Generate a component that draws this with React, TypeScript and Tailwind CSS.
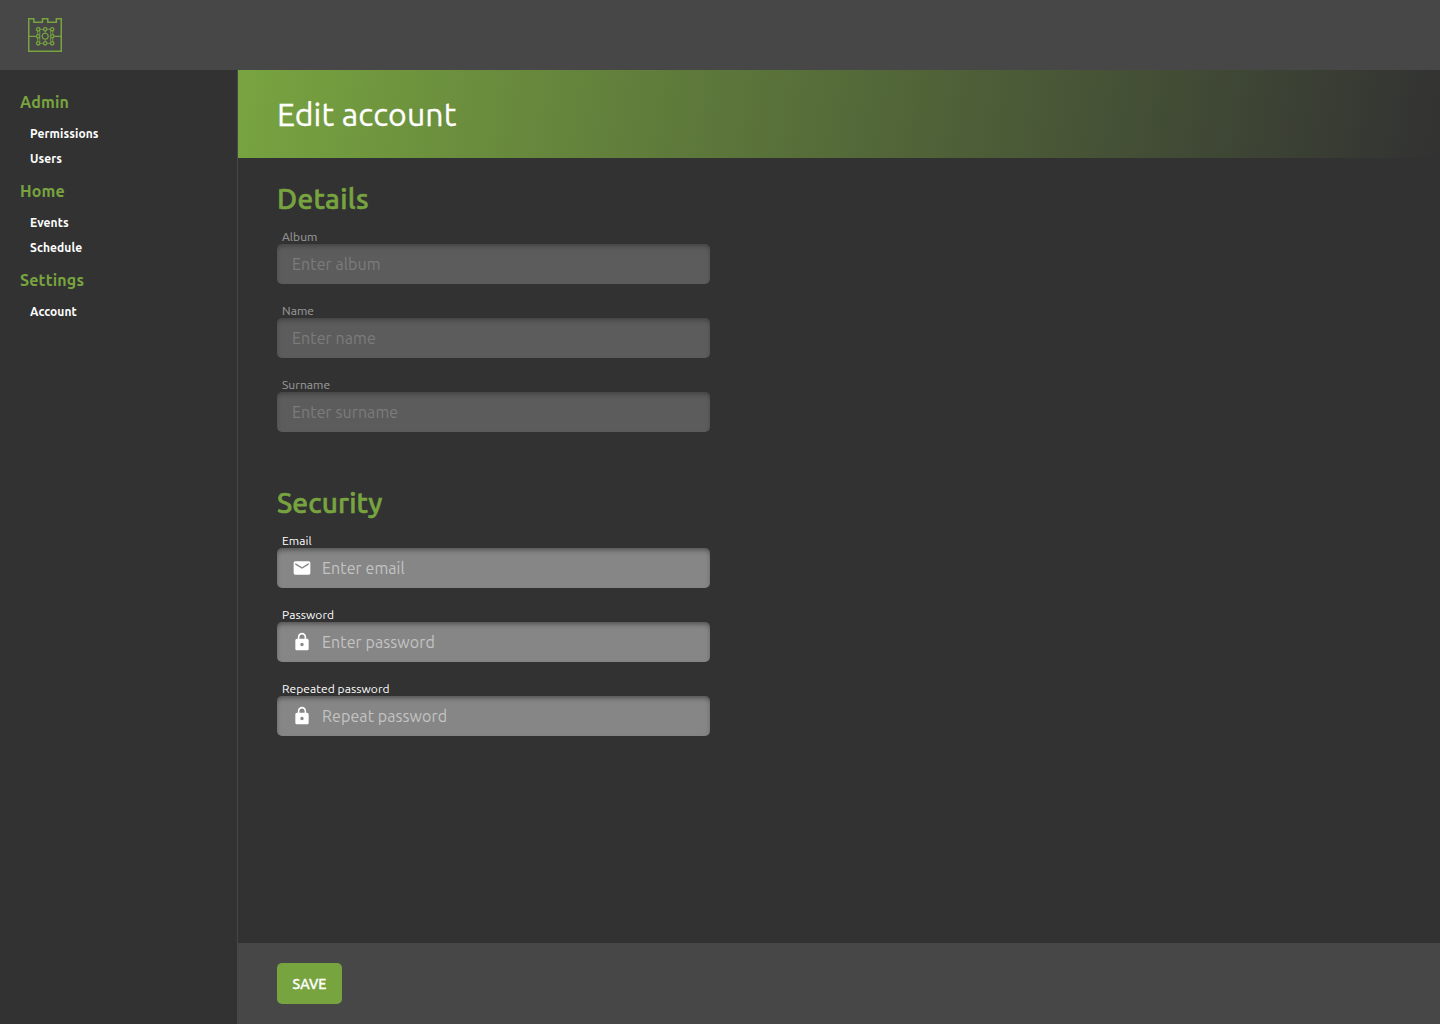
import { MdEmail, MdLock } from "react-icons/md";
import type { IconType } from "react-icons";

const menu = [
  { title: "Admin", items: ["Permissions", "Users"] },
  { title: "Home", items: ["Events", "Schedule"] },
  { title: "Settings", items: ["Account"] },
];

function Logo() {
  const nodes = [
    [10.2, 11.3], [17.2, 11.3], [24.2, 11.3],
    [10.2, 18.3], [24.2, 18.3],
    [10.2, 25.3], [17.2, 25.3], [24.2, 25.3],
  ];
  return (
    <svg className="ml-7 size-[34px]" viewBox="0 0 34 34" fill="none" stroke="#78a440">
      <path strokeWidth="1.5" d="M.75 33.25V.75h5.1v3.6h8.6V.75h5.3v3.6h8.6V.75h4.9v32.5z" />
      <path strokeWidth="1.2" d="M0 18.4h8.6M25.8 18.4H34" />
      <path strokeWidth="1" strokeOpacity=".85" d="M12 11.3h3.4M19 11.3h3.4M12 25.3h3.4M19 25.3h3.4M17.2 13v2.3M17.2 21.3v2.2M9.6 13v3.5M24.8 13v3.5M9.6 20.1v3.4M24.8 20.1v3.4M11.8 13v3.5M22.6 13v3.5M11.8 20.1v3.4M22.6 20.1v3.4" />
      <circle cx="17.2" cy="18.3" r="3" strokeWidth="1.1" />
      {nodes.map(([x, y]) => (
        <circle key={`${x}-${y}`} cx={x} cy={y} r="1.7" strokeWidth="1.3" />
      ))}
    </svg>
  );
}

type FieldProps = { label: string; placeholder: string; icon?: IconType; disabled?: boolean; type?: string };

function Field({ label, placeholder, icon: Icon, disabled, type = "text" }: FieldProps) {
  return (
    <label className={disabled ? "block opacity-50" : "block"}>
      <span className="block pl-[5px] text-xs leading-[14px] tracking-[0.07px] text-white">{label}</span>
      <span className="flex h-10 w-[433px] items-center rounded-[5px] bg-[#868686] px-[15px] shadow-[inset_0_3px_5px_-1px_rgba(0,0,0,0.4)]">
        {Icon && <Icon className="mr-[10px] size-5 text-white" />}
        <input
          type={type}
          disabled={disabled}
          placeholder={placeholder}
          className="h-full min-w-0 flex-1 bg-transparent text-base tracking-[0.09px] text-white outline-none placeholder:text-[#c3c3c3]"
        />
      </span>
    </label>
  );
}

export default function App() {
  return (
    <div className="flex h-screen flex-col bg-[#323232] font-['Ubuntu','Noto_Sans',sans-serif] text-white">
      <header className="flex h-[70px] shrink-0 items-center bg-[#474747]">
        <Logo />
      </header>
      <div className="flex min-h-0 flex-1">
        <nav className="w-[238px] shrink-0 border-r border-[#474747] pt-[19px]">
          {menu.map((group) => (
            <section key={group.title} className="mb-[7px]">
              <h3 className="pl-5 text-base leading-[26px] font-bold tracking-[0.15px] text-[#78a440]">{group.title}</h3>
              <ul className="pt-1.5">
                {group.items.map((item) => (
                  <li key={item} className="pl-[30px] text-xs leading-[25px] font-bold tracking-[0.1px]">{item}</li>
                ))}
              </ul>
            </section>
          ))}
        </nav>
        <main className="flex min-w-0 flex-1 flex-col">
          <div className="flex h-[88px] shrink-0 items-center bg-[linear-gradient(100deg,#78a440,#323232)] pl-[39px]">
            <h1 className="text-[32px] leading-[38px] tracking-[0.12px] [-webkit-text-stroke:0.3px_#fff]">Edit account</h1>
          </div>
          <div className="flex-1 pl-[39px] pt-[25px]">
            <h2 className="text-[28px] leading-8 font-medium tracking-[0.35px] text-[#78a440] [-webkit-text-stroke:0.6px_#78a440]">Details</h2>
            <div className="flex flex-col gap-5 pt-[15px]">
              <Field label="Album" placeholder="Enter album" disabled />
              <Field label="Name" placeholder="Enter name" disabled />
              <Field label="Surname" placeholder="Enter surname" disabled />
            </div>
            <h2 className="pt-[55px] text-[28px] leading-8 font-medium tracking-[0.15px] text-[#78a440] [-webkit-text-stroke:0.6px_#78a440]">Security</h2>
            <div className="flex flex-col gap-5 pt-[15px]">
              <Field label="Email" placeholder="Enter email" icon={MdEmail} type="email" />
              <Field label="Password" placeholder="Enter password" icon={MdLock} type="password" />
              <Field label="Repeated password" placeholder="Repeat password" icon={MdLock} type="password" />
            </div>
          </div>
          <footer className="flex h-[81px] shrink-0 items-center bg-[#474747] pl-[39px]">
            <button className="h-[41px] w-[65px] rounded-[5px] bg-[#78a440] text-sm font-medium tracking-[0.1px] [-webkit-text-stroke:0.3px_#fff]">SAVE</button>
          </footer>
        </main>
      </div>
    </div>
  );
}
